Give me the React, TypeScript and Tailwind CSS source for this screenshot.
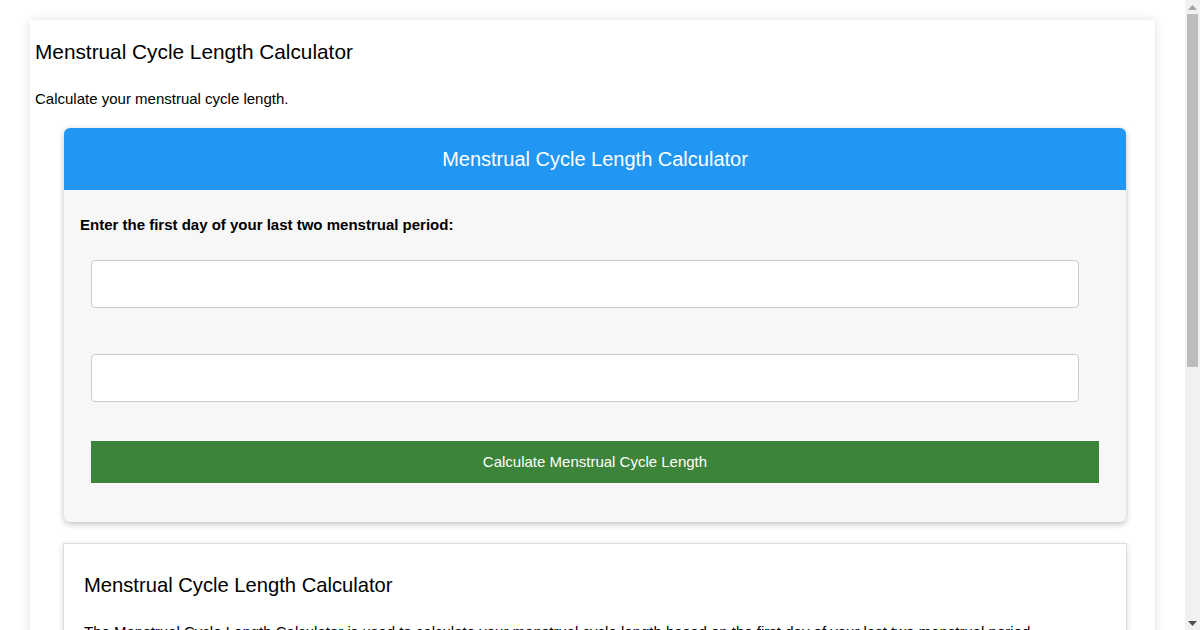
export default function App() {
  return (
    <div className="flex h-[630px] overflow-hidden bg-white font-['Liberation_Sans',Arial,sans-serif] text-black">
      <div className="w-[1185px] shrink-0 pt-[20px]">
        <div className="ml-[30px] w-[1125px] bg-white shadow-[0_0_10px_rgba(0,0,0,0.12)] px-[5px] pt-[19px] pb-[40px]">
          <h1 className="text-[20.8px] leading-[25px]">Menstrual Cycle Length Calculator</h1>
          <p className="mt-[26px] text-[15px] leading-[17px]">Calculate your menstrual cycle length.</p>
          <div className="mt-[21px] ml-[29px] w-[1062px] rounded-[6px] overflow-hidden bg-[#f7f7f7] shadow-[0_2px_6px_rgba(0,0,0,0.25)]">
            <div className="h-[62px] bg-[#2196f3] flex items-center justify-center">
              <span className="text-white text-[20px] leading-[23px]">Menstrual Cycle Length Calculator</span>
            </div>
            <div className="px-[16px] pt-[26px] pb-[39px]">
              <p className="text-[15px] leading-[17px] font-bold">Enter the first day of your last two menstrual period:</p>
              <input type="text" aria-label="First date" className="block mt-[27px] ml-[11px] w-[988px] h-[48px] bg-white border border-[#cccccc] rounded-[4px] px-[10px] outline-none" />
              <input type="text" aria-label="Second date" className="block mt-[46px] ml-[11px] w-[988px] h-[48px] bg-white border border-[#cccccc] rounded-[4px] px-[10px] outline-none" />
              <button className="block mt-[39px] ml-[11px] w-[1008px] h-[42px] bg-[#3b843a] text-white text-[15px]">Calculate Menstrual Cycle Length</button>
            </div>
          </div>
          <div className="mt-[21px] ml-[28px] w-[1064px] border border-[#dddddd] bg-white shadow-[0_2px_6px_rgba(0,0,0,0.15)] px-[20px] pt-[30px] pb-[24px]">
            <h2 className="text-[20.2px] leading-[23px]">Menstrual Cycle Length Calculator</h2>
            <p className="mt-[23px] text-[15px] leading-[24px]">
              The Menstrual Cycle Length Calculator is used to calculate your menstrual cycle length based on the first day of your last two menstrual period.
            </p>
            <p className="mt-[16px] text-[15px] leading-[24px]">
              The menstrual cycle is counted from the first day of one period to the first day of the next period. Enter the first day of your last two periods and the calculator will work out the number of days between them.
            </p>
          </div>
        </div>
      </div>
      <div className="w-[15px] shrink-0 h-[630px] bg-[#f1f1f1] flex flex-col items-center">
        <div className="h-[14px] flex items-center justify-center">
          <svg width="9" height="5" viewBox="0 0 9 5"><path d="M0 5 L4.5 0 L9 5 Z" fill="#a3a3a3" /></svg>
        </div>
        <div className="w-[11px] h-[353px] bg-[#bdbdbd]" />
        <div className="flex-1" />
        <div className="h-[14px] flex items-center justify-center">
          <svg width="9" height="5" viewBox="0 0 9 5"><path d="M0 0 L9 0 L4.5 5 Z" fill="#505050" /></svg>
        </div>
      </div>
    </div>
  );
}
